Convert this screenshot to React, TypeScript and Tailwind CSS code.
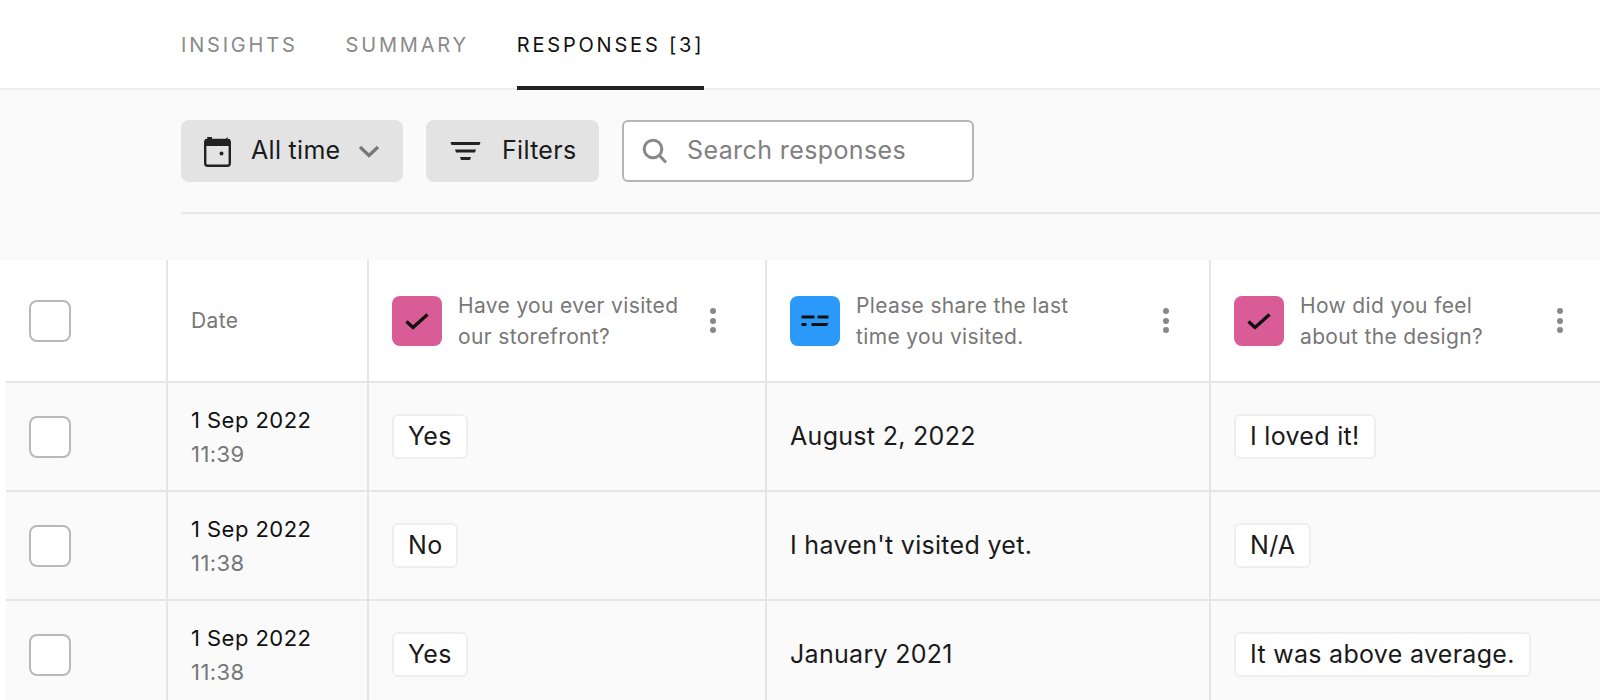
import React from "react";

function Check() {
  return (
    <div className="w-[50px] h-[50px] shrink-0 rounded-lg bg-[#d95c96] flex items-center justify-center">
      <svg width="26" height="20" viewBox="0 0 26 20" fill="none">
        <path d="M2.5 10.5 L9 16.5 L23.5 3.5" stroke="#111" strokeWidth="3.4" />
      </svg>
    </div>
  );
}

function TextIcon() {
  return (
    <div className="w-[50px] h-[50px] shrink-0 rounded-lg bg-[#2b99f9] flex items-center justify-center">
      <svg width="28" height="12" viewBox="0 0 28 12" fill="#111">
        <rect x="0.5" y="0.5" width="13" height="3" />
        <rect x="16.5" y="0.5" width="11" height="3" />
        <rect x="0.5" y="8" width="5" height="3" />
        <path d="M10.5 8 H27.5 L26 11 H10.5 Z" />
      </svg>
    </div>
  );
}

function Kebab() {
  return (
    <div className="flex flex-col gap-[3.5px] shrink-0">
      <span className="w-[6px] h-[6px] rounded-full bg-[#888]" />
      <span className="w-[6px] h-[6px] rounded-full bg-[#888]" />
      <span className="w-[6px] h-[6px] rounded-full bg-[#888]" />
    </div>
  );
}

function Box() {
  return <div className="w-[42px] h-[42px] rounded-lg border-2 border-[#b9b9b9] bg-white" />;
}

function Tag({ children }: { children: React.ReactNode }) {
  return (
    <span className="inline-flex items-center h-[45px] px-[14px] rounded-md border-2 border-[#eeeeee] bg-white text-[25px] tracking-[0.3px] text-[#1a1a1a]">
      {children}
    </span>
  );
}

const cols = [
  "w-[160px] pl-[23px]",
  "w-[201px] pl-[23px] border-l-2 border-[#e5e5e5]",
  "w-[398px] pl-[23px] border-l-2 border-[#e5e5e5]",
  "w-[444px] pl-[23px] border-l-2 border-[#e5e5e5]",
  "flex-1 pl-[23px] border-l-2 border-[#e5e5e5]",
];

function Head({ icon, l1, l2, cls, gap }: { icon: React.ReactNode; l1: string; l2: string; cls: string; gap: string }) {
  return (
    <div className={`${cls} flex items-center`}>
      {icon}
      <div className="ml-[16px] text-[21px] leading-[31px] tracking-[0.35px] text-[#777777] whitespace-nowrap">
        {l1}
        <br />
        {l2}
      </div>
      <div className={gap}>
        <Kebab />
      </div>
    </div>
  );
}

function Row({ time, a, b, c }: { time: string; a: string; b: string; c: string }) {
  return (
    <div className="flex h-[109px] ml-[6px] border-b-2 border-[#e5e5e5] bg-[#fafafa]">
      <div className={`${cols[0]} flex items-center`}>
        <Box />
      </div>
      <div className={`${cols[1]} flex flex-col justify-center`}>
        <div className="text-[22px] leading-[34px] tracking-[0.45px] text-[#111111]">1 Sep 2022</div>
        <div className="text-[22px] leading-[34px] tracking-[0.45px] text-[#777777]">{time}</div>
      </div>
      <div className={`${cols[2]} flex items-center`}>
        <Tag>{a}</Tag>
      </div>
      <div className={`${cols[3]} flex items-center text-[25px] tracking-[0.3px] text-[#1a1a1a]`}>{b}</div>
      <div className={`${cols[4]} flex items-center`}>
        <Tag>{c}</Tag>
      </div>
    </div>
  );
}

export default function App() {
  return (
    <div className="h-[700px] w-[1600px] overflow-hidden bg-white font-['Inter',sans-serif]">
      <div className="h-[90px] border-b-2 border-[#eeeeee] pl-[181px] flex gap-[48px] text-[20px] tracking-[2.8px]">
        <div className="h-[88px] pt-[30px] leading-[30px] text-[#8a8a8a]">INSIGHTS</div>
        <div className="h-[88px] pt-[30px] leading-[30px] text-[#8a8a8a]">SUMMARY</div>
        <div className="h-[90px] pt-[30px] leading-[30px] text-[#111111] border-b-4 border-[#222222]">RESPONSES [3]</div>
      </div>

      <div className="h-[170px] bg-[#fafafa] pl-[181px] pt-[30px]">
        <div className="flex h-[62px] gap-[23px]">
          <div className="w-[222px] rounded-lg bg-[#e3e3e3] flex items-center pl-[23px] text-[25px] text-[#1a1a1a]">
            <svg width="27" height="31" viewBox="0 0 27 31" fill="none">
              <path d="M3 1 L4 5 H8 V1 M19 5 H23 L24 1" fill="#222" />
              <rect x="1" y="3" width="25" height="7" fill="#222" />
              <rect x="1.2" y="4" width="24.6" height="25.8" rx="2.5" stroke="#222" strokeWidth="2.4" />
              <circle cx="17.5" cy="17.5" r="2" fill="#222" />
            </svg>
            <span className="ml-[20px] tracking-[0.3px]">All time</span>
            <svg className="ml-[17px]" width="22" height="13" viewBox="0 0 22 13" fill="none">
              <path d="M2 2 L11 10.5 L20 2" stroke="#777" strokeWidth="3.2" />
            </svg>
          </div>
          <div className="w-[173px] rounded-lg bg-[#e3e3e3] flex items-center pl-[24px] text-[25px] text-[#1a1a1a]">
            <svg width="31" height="20" viewBox="0 0 31 20" fill="#222">
              <path d="M0.5 1 H30.5 L29.5 4 H1.5 Z" />
              <path d="M5 8.5 H26 L25 11.5 H6 Z" />
              <path d="M10 16 H21 L20 19 H11 Z" />
            </svg>
            <span className="ml-[21px] tracking-[0.3px]">Filters</span>
          </div>
          <div className="w-[352px] rounded-md border-2 border-[#b5b5b5] bg-white flex items-center pl-[18px] text-[25px] text-[#808080]">
            <svg width="26" height="26" viewBox="0 0 26 26" fill="none">
              <circle cx="11" cy="11" r="8.8" stroke="#888" strokeWidth="3" />
              <path d="M17.5 17.5 L24 24.5" stroke="#888" strokeWidth="3" />
            </svg>
            <span className="ml-[19px] tracking-[0.4px]">Search responses</span>
          </div>
        </div>
        <div className="mt-[30px] h-[2px] bg-[#e8e8e8]" />
      </div>

      <div className="flex h-[121px] ml-[6px] bg-white">
        <div className={`${cols[0]} flex items-center`}>
          <Box />
        </div>
        <div className={`${cols[1]} flex items-center text-[21px] tracking-[0.35px] text-[#777777]`}>Date</div>
        <Head cls={cols[2]} icon={<Check />} l1="Have you ever visited" l2="our storefront?" gap="ml-[32px]" />
        <Head cls={cols[3]} icon={<TextIcon />} l1="Please share the last" l2="time you visited." gap="ml-[94px]" />
        <Head cls={cols[4]} icon={<Check />} l1="How did you feel" l2="about the design?" gap="ml-[74px]" />
      </div>
      <div className="ml-[6px] h-[2px] bg-[#e5e5e5]" />
      <Row time="11:39" a="Yes" b="August 2, 2022" c="I loved it!" />
      <Row time="11:38" a="No" b="I haven't visited yet." c="N/A" />
      <Row time="11:38" a="Yes" b="January 2021" c="It was above average." />
    </div>
  );
}
